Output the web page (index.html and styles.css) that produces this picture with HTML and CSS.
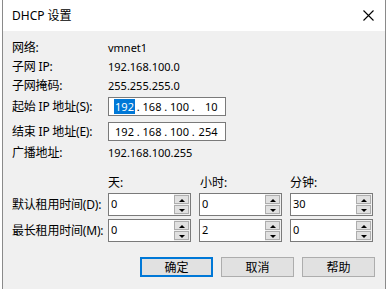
FILE: index.html
```html
<!DOCTYPE html>
<html lang="zh-CN">
<head>
  <meta charset="UTF-8">
  <title>DHCP 设置</title>
  <link rel="stylesheet" href="styles.css">
</head>
<body>
  <div class="dialog">
    <div class="titlebar">
      <span class="title">DHCP 设置</span>
      <svg class="close" width="11" height="11" viewBox="0 0 11 11">
        <path d="M0.5 0.5 L10.5 10.5 M10.5 0.5 L0.5 10.5" stroke="#000" stroke-width="1.1" fill="none"/>
      </svg>
    </div>

    <div class="content">
      <div class="row first">
        <span class="label">网络:</span>
        <span class="value">vmnet1</span>
      </div>
      <div class="row">
        <span class="label">子网 IP:</span>
        <span class="value">192.168.100.0</span>
      </div>
      <div class="row">
        <span class="label">子网掩码:</span>
        <span class="value">255.255.255.0</span>
      </div>

      <div class="row ip-row">
        <span class="label">起始 IP 地址(<u>S</u>):</span>
        <div class="ip-box">
          <span class="seg"><span class="sel">192</span></span>
          <span class="dot">.</span>
          <span class="seg">168</span>
          <span class="dot">.</span>
          <span class="seg">100</span>
          <span class="dot">.</span>
          <span class="seg">10</span>
        </div>
      </div>
      <div class="row ip-row second">
        <span class="label">结束 IP 地址(<u>E</u>):</span>
        <div class="ip-box">
          <span class="seg">192</span>
          <span class="dot">.</span>
          <span class="seg">168</span>
          <span class="dot">.</span>
          <span class="seg">100</span>
          <span class="dot">.</span>
          <span class="seg">254</span>
        </div>
      </div>
      <div class="row broadcast">
        <span class="label">广播地址:</span>
        <span class="value">192.168.100.255</span>
      </div>

      <div class="row heads">
        <span class="label"></span>
        <div class="spins">
          <span class="head">天:</span>
          <span class="head">小时:</span>
          <span class="head">分钟:</span>
        </div>
      </div>

      <div class="row spin-row">
        <span class="label">默认租用时间(<u>D</u>):</span>
        <div class="spins">
          <div class="spin"><span class="num">0</span><div class="arrows"><span class="up"></span><span class="down"></span></div></div>
          <div class="spin"><span class="num">0</span><div class="arrows"><span class="up"></span><span class="down"></span></div></div>
          <div class="spin"><span class="num">30</span><div class="arrows"><span class="up"></span><span class="down"></span></div></div>
        </div>
      </div>
      <div class="row spin-row second">
        <span class="label">最长租用时间(<u>M</u>):</span>
        <div class="spins">
          <div class="spin"><span class="num">0</span><div class="arrows"><span class="up"></span><span class="down"></span></div></div>
          <div class="spin"><span class="num">2</span><div class="arrows"><span class="up"></span><span class="down"></span></div></div>
          <div class="spin"><span class="num">0</span><div class="arrows"><span class="up"></span><span class="down"></span></div></div>
        </div>
      </div>

      <div class="buttons">
        <button class="btn default">确定</button>
        <button class="btn">取消</button>
        <button class="btn">帮助</button>
      </div>
    </div>
  </div>
</body>
</html>
```

FILE: styles.css
```css
body {
  margin: 0;
  background: #ffffff;
  font-family: "Noto Sans", "Noto Sans CJK SC", sans-serif;
  font-size: 12px;
  color: #000;
  overflow: hidden;
}
.dialog {
  margin-left: 2px;
  width: 382px;
  height: 300px;
  border-left: 1px solid #8a8a8a;
  border-right: 1px solid #8a8a8a;
  background: #f0f0f0;
}
.titlebar {
  height: 31px;
  background: #ffffff;
  display: flex;
  align-items: center;
  justify-content: space-between;
  padding: 0 11px 0 9px;
}
.title {
  font-size: 12px;
  margin-top: -1px;
}
.close {
  margin-top: -1px;
}
.content {
  padding: 7px 0 0 9px;
}
.row {
  display: flex;
  align-items: center;
  height: 19px;
  line-height: 19px;
}
.label {
  width: 96px;
  flex: none;
  letter-spacing: -0.2px;
  white-space: nowrap;
}
u {
  text-decoration: none;
}
.value, .ip-box, .num {
  font-size: 11px;
}
.ip-row {
  margin-top: 2px;
}
.ip-row.second {
  margin-top: 6px;
}
.broadcast {
  margin-top: 2px;
}
.ip-box {
  box-sizing: border-box;
  width: 118px;
  height: 19px;
  border: 1px solid #7a7a7a;
  background: #fff;
  display: flex;
  align-items: center;
  padding-left: 5px;
  line-height: 15px;
}
.seg {
  width: 21px;
  flex: none;
  text-align: center;
}
.seg:last-child {
  text-align: right;
}
.dot {
  width: 6.5px;
  flex: none;
  text-align: center;
}
.sel {
  background: #0078d7;
  color: #fff;
  display: inline-block;
  padding: 0 1px;
}
.heads {
  margin-top: 11px;
}
.spins {
  display: flex;
  gap: 8px;
}
.head {
  width: 83px;
}
.head:nth-child(2) {
  padding-left: 1px;
  width: 82px;
}
.spin-row {
  height: 23px;
  margin-top: 1px;
}
.spin-row.second {
  margin-top: 3px;
}
.spin {
  box-sizing: border-box;
  width: 83px;
  height: 23px;
  border: 1px solid #7a7a7a;
  background: #fff;
  display: flex;
}
.num {
  flex: 1;
  padding-left: 2px;
  line-height: 19px;
}
.arrows {
  width: 15px;
  display: flex;
  flex-direction: column;
  gap: 1px;
  padding: 1px 1px 1px 0;
  background: #f0f0f0;
}
.arrows span {
  flex: 1;
  box-sizing: border-box;
  border: 1px solid #adadad;
  background: #e1e1e1;
  position: relative;
}
.arrows span::after {
  content: "";
  position: absolute;
  left: 4px;
  width: 0;
  height: 0;
  border-left: 3px solid transparent;
  border-right: 3px solid transparent;
}
.up::after {
  top: 3px;
  border-bottom: 3px solid #000;
}
.down::after {
  top: 3px;
  border-top: 3px solid #000;
}
.buttons {
  display: flex;
  justify-content: flex-end;
  gap: 8px;
  margin-top: 15px;
  padding-right: 10px;
}
.btn {
  box-sizing: border-box;
  width: 73px;
  height: 20px;
  border: 1px solid #adadad;
  background: #e1e1e1;
  font-family: "Noto Sans CJK SC", sans-serif;
  font-size: 12px;
  padding: 0;
  line-height: 16px;
}
.btn.default {
  border: 2px solid #0078d7;
}
```
